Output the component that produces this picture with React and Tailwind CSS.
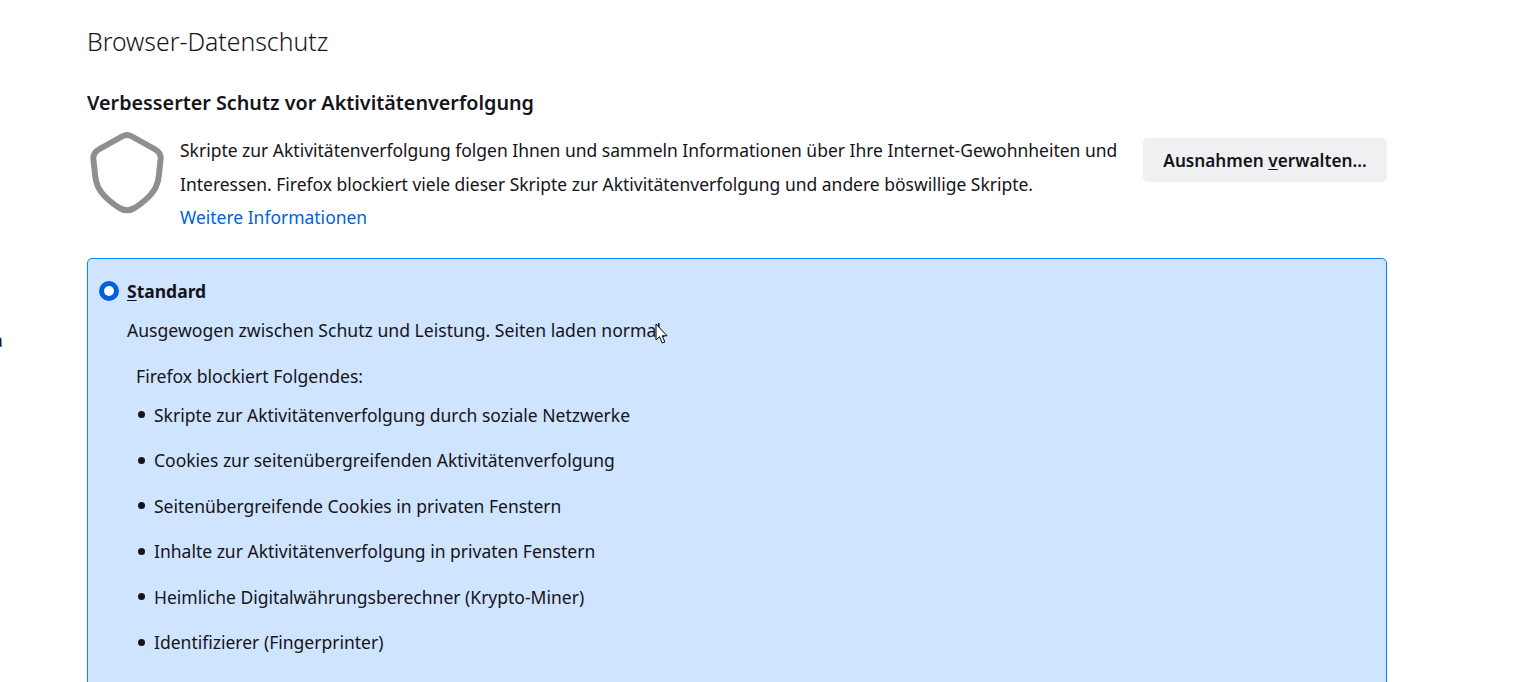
const font = { fontFamily: '"Noto Sans", sans-serif' };

const blocked = [
  'Skripte zur Aktivitätenverfolgung durch soziale Netzwerke',
  'Cookies zur seitenübergreifenden Aktivitätenverfolgung',
  'Seitenübergreifende Cookies in privaten Fenstern',
  'Inhalte zur Aktivitätenverfolgung in privaten Fenstern',
  'Heimliche Digitalwährungsberechner (Krypto-Miner)',
  'Identifizierer (Fingerprinter)',
];

function Shield() {
  return (
    <svg width="76" height="84" viewBox="0 0 76 84" fill="none" className="ml-[3px] shrink-0">
      <path
        d="M37 4C35.2 4 33.6 4.6 32 5.5L9.5 18C5.2 20.4 3.2 23 3.3 27.5L5.2 45C6 53 9 59.5 14.5 65C20 70.5 25 74.5 30.5 77.5C34.5 79.7 39.5 79.7 43.5 77.5C49 74.5 54 70.5 59.500 65C65 59.500 68 53 68.8 45L70.7 27.5C70.800 23 68.8 20.4 64.5 18L42 5.500C40.4 4.600 38.800 4 37 4Z"
        stroke="#8f8f8f"
        strokeWidth="6"
        strokeLinejoin="round"
      />
    </svg>
  );
}

function Cursor() {
  return (
    <svg width="13" height="22" viewBox="0 0 13 22" className="absolute left-[655px] top-[323px]">
      <path d="M1 1V17L4.6 13.6L7.2 20L9.8 19L7.2 12.8H12L1 1Z" fill="#fff" stroke="#000" strokeWidth="1" />
    </svg>
  );
}

export default function App() {
  return (
    <div className="relative h-[682px] overflow-hidden bg-white text-[#15141a]" style={font}>
      <div className="w-[1387px] pl-[87px]">
        <h1 className="pt-[21px] text-[24.8px] leading-[40px] font-light">Browser-Datenschutz</h1>
        <h2 className="mt-[27px] text-[19.75px] leading-[30px] font-semibold">Verbesserter Schutz vor Aktivitätenverfolgung</h2>
        <div className="mt-[13px] flex items-start">
          <Shield />
          <div className="ml-[14px] pt-[3px] text-[17.48px] leading-[33.5px] whitespace-nowrap">
            <p>Skripte zur Aktivitätenverfolgung folgen Ihnen und sammeln Informationen über Ihre Internet-Gewohnheiten und</p>
            <p>Interessen. Firefox blockiert viele dieser Skripte zur Aktivitätenverfolgung und andere böswillige Skripte.</p>
            <a className="block text-[#0061e0]">Weitere Informationen</a>
          </div>
          <button className="mt-[7px] ml-auto flex h-[44px] w-[244px] shrink-0 items-center justify-center rounded-[5px] bg-[#f0f0f2] pt-[2px] text-[17.2px] font-semibold">
            <span>Ausnahmen <span className="underline underline-offset-2">v</span>erwalten...</span>
          </button>
        </div>
        <div className="mt-[23px] h-[500px] rounded-[5px] border border-[#0a84ff] bg-[#cfe4fe] pt-[19px] pl-[11px]">
          <div className="flex items-center">
            <span className="flex size-[20px] items-center justify-center rounded-full bg-[#0061e0]">
              <span className="size-[10px] rounded-full bg-white" />
            </span>
            <span className="ml-[8px] text-[17.5px] leading-[26px] font-bold">
              <span className="underline underline-offset-2">S</span>tandard
            </span>
          </div>
          <p className="mt-[13px] ml-[28px] text-[17.6px] leading-[26px]">Ausgewogen zwischen Schutz und Leistung. Seiten laden normal.</p>
          <p className="mt-[20px] ml-[37px] text-[17.6px] leading-[26px]">Firefox blockiert Folgendes:</p>
          <ul className="mt-[13px] ml-[39px] flex flex-col gap-[19.6px] text-[17.5px] leading-[26px]">
            {blocked.map((item) => (
              <li key={item} className="flex items-center">
                <span className="mr-[9px] size-[7px] rounded-full bg-[#15141a]" />
                {item}
              </li>
            ))}
          </ul>
        </div>
      </div>
      <span className="absolute left-[-7px] top-[327px] text-[17.6px] leading-[26px]">a</span>
      <Cursor />
    </div>
  );
}
